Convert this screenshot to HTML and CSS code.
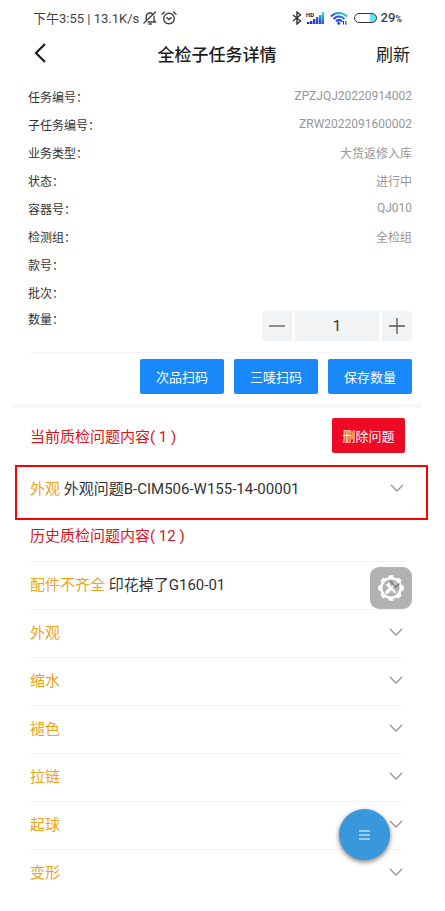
FILE: index.html
```html
<!DOCTYPE html>
<html lang="zh-CN">
<head>
<meta charset="utf-8">
<meta name="viewport" content="width=device-width, initial-scale=1">
<title>全检子任务详情</title>
<link rel="stylesheet" href="styles.css">
</head>
<body>
<svg class="defs" width="0" height="0" aria-hidden="true">
  <defs>
    <linearGradient id="signal" x1="0" y1="1" x2="1" y2="0">
      <stop offset="0" stop-color="#3a10d8"/><stop offset=".5" stop-color="#2459d6"/><stop offset="1" stop-color="#2ff0dc"/>
    </linearGradient>
    <symbol id="chevron" viewBox="0 0 14 8"><path d="M1 1l6 6 6-6" fill="none" stroke="#969799" stroke-width="1.4"/></symbol>
  </defs>
</svg>

<div class="status">
  <div class="status-side">
    <span>下午3:55 | 13.1K/s</span>
    <svg width="14" height="14" viewBox="0 0 14 14" fill="none" stroke="#444" stroke-width="1.4" stroke-linecap="round"><path d="M1 12L12.500 1M3.200 8.500V6C3.200 3.500 4.800 2 7 2c1 0 1.800.3 2.500.9M11 5.200V9l1.300 2H5M6 13h2.400"/></svg>
    <svg class="alarm" width="16" height="14" viewBox="0 0 16 14" fill="none" stroke="#444" stroke-width="1.4" stroke-linecap="round" stroke-linejoin="round"><circle cx="8" cy="7.500" r="5.300"/><path d="M1 3.200L3.500 1M15 3.200L12.500 1M5.800 6.600L8 8.500l2.200-1.900"/></svg>
  </div>
  <div class="status-side">
    <svg width="10" height="14" viewBox="0 0 10 14" fill="none" stroke="#333" stroke-width="1.400"><path d="M1 4l7.500 6L5 13V1l3.500 3L1 10"/></svg>
    <svg class="bars" width="18" height="14" viewBox="0 0 18 14"><path fill="url(#signal)" d="M1 11h2.400v2H1zM4 10h2.400v3H4zM7 8h2.400v5H7zM10 6h2.400v7H10zM13 4h2.400v9H13zM15.800 1H18v12h-2.200z"/><text x="0" y="6" class="hd">HD</text></svg>
    <svg class="wifi" width="18" height="14" viewBox="0 0 18 14" fill="none" stroke="url(#signal)" stroke-width="2"><path d="M1 5.500C5.500.8 12.500.8 17 5.500M3.500 8C7 4.600 11 4.600 14.500 8M6 10.300c2-1.900 4-1.900 6 0"/><circle cx="9" cy="12" r=".8"/><path stroke="#333" stroke-width="1" d="M13.500 13.500v-3.500M15.800 10v3.500M12.500 11l1-1M16.800 12.500l-1 1"/></svg>
    <span class="battery"></span>
    <span class="percent">29<small>%</small></span>
  </div>
</div>

<header class="nav">
  <button class="back" type="button" aria-label="返回"><svg width="12" height="20" viewBox="0 0 12 20" fill="none" stroke="#1c1c1c" stroke-width="2.200"><path d="M11 1L2 10l9 9"/></svg></button>
  <h1>全检子任务详情</h1>
  <button class="refresh" type="button">刷新</button>
</header>

<main>
  <section class="info">
    <dl>
      <div><dt>任务编号：</dt><dd>ZPZJQJ20220914002</dd></div>
      <div><dt>子任务编号：</dt><dd>ZRW2022091600002</dd></div>
      <div><dt>业务类型：</dt><dd>大货返修入库</dd></div>
      <div><dt>状态：</dt><dd>进行中</dd></div>
      <div><dt>容器号：</dt><dd>QJ010</dd></div>
      <div><dt>检测组：</dt><dd>全检组</dd></div>
      <div><dt>款号：</dt><dd></dd></div>
      <div><dt>批次：</dt><dd></dd></div>
    </dl>
    <div class="quantity">
      <label for="qty">数量：</label>
      <div class="stepper">
        <button class="minus" type="button" aria-label="减少"><svg width="16" height="16" viewBox="0 0 16 16"><path d="M0 8h16" stroke="#555" stroke-width="1.300"/></svg></button>
        <input id="qty" type="text" inputmode="numeric" value="1">
        <button class="plus" type="button" aria-label="增加"><svg width="16" height="16" viewBox="0 0 16 16"><path d="M0 8h16M8 0v16" stroke="#555" stroke-width="1.300"/></svg></button>
      </div>
    </div>
    <div class="actions">
      <button type="button">次品扫码</button>
      <button type="button">三唛扫码</button>
      <button type="button">保存数量</button>
    </div>
  </section>

  <section class="current">
    <div class="current-head">
      <h2>当前质检问题内容( 1 )</h2>
      <button class="delete" type="button">删除问题</button>
    </div>
    <button class="issue marked" type="button"><span><b>外观</b> 外观问题B-CIM506-W155-14-00001</span><svg width="14" height="8"><use href="#chevron"/></svg></button>
  </section>

  <section class="history">
    <h2>历史质检问题内容( 12 )</h2>
    <button class="issue" type="button"><span><b>配件不齐全</b> 印花掉了G160-01</span><svg width="14" height="8"><use href="#chevron"/></svg></button>
    <button class="issue" type="button"><b>外观</b><svg width="14" height="8"><use href="#chevron"/></svg></button>
    <button class="issue" type="button"><b>缩水</b><svg width="14" height="8"><use href="#chevron"/></svg></button>
    <button class="issue" type="button"><b>褪色</b><svg width="14" height="8"><use href="#chevron"/></svg></button>
    <button class="issue" type="button"><b>拉链</b><svg width="14" height="8"><use href="#chevron"/></svg></button>
    <button class="issue" type="button"><b>起球</b><svg width="14" height="8"><use href="#chevron"/></svg></button>
    <button class="issue" type="button"><b>变形</b><svg width="14" height="8"><use href="#chevron"/></svg></button>
  </section>
</main>

<button class="tools" type="button" aria-label="工具">
  <svg width="28" height="28" viewBox="0 0 28 28">
    <circle cx="14" cy="14" r="9.800" fill="none" stroke="#fff" stroke-width="2.600"/>
    <g fill="#fff">
      <path id="tooth" d="M11.200 4.500L11.800 1.200h4.400l.6 3.300z"/>
      <use href="#tooth" transform="rotate(45 14 14)"/><use href="#tooth" transform="rotate(90 14 14)"/><use href="#tooth" transform="rotate(135 14 14)"/><use href="#tooth" transform="rotate(180 14 14)"/><use href="#tooth" transform="rotate(225 14 14)"/><use href="#tooth" transform="rotate(270 14 14)"/><use href="#tooth" transform="rotate(315 14 14)"/>
    </g>
    <path d="M11 11l7 7" stroke="#fff" stroke-width="2.400" stroke-linecap="round"/>
    <path d="M8.500 10.500a3 3 0 0 0 4 1.500 3 3 0 0 0-1.500-4v2.500z" fill="#fff"/>
    <path d="M18.500 9.500l-5 5" stroke="#fff" stroke-width="1.500"/>
    <path d="M13 15l-3 3.200" stroke="#fff" stroke-width="3.600" stroke-linecap="round"/>
    <path d="M13 7l6 6 3.500-3.500" fill="none" stroke="#777" stroke-width="1.400"/>
  </svg>
</button>

<button class="fab" type="button" aria-label="菜单">
  <svg width="11" height="10" viewBox="0 0 11 10"><path d="M0 1h11M0 5h11M0 9h11" stroke="#fff" stroke-width="1.200"/></svg>
</button>
</body>
</html>
```
FILE: styles.css
```css
* { box-sizing: border-box; }

body {
  margin: 0;
  background: #fff;
  color: #333;
  font-family: Roboto, "Noto Sans CJK SC", sans-serif;
  font-size: 15px;
}

button, input {
  margin: 0;
  padding: 0;
  border: 0;
  background: none;
  color: inherit;
  font: inherit;
}

h1, h2, dl, dd { margin: 0; }
svg { display: block; flex: none; }
.defs { position: absolute; }

.status {
  display: flex;
  justify-content: space-between;
  height: 35px;
  padding: 0 43px 0 33px;
  color: #444;
  font-size: 13px;
}
.status-side { display: flex; align-items: center; gap: 4px; }
.hd { fill: #222; font-size: 6px; font-weight: 700; }
.bars, .wifi { margin-right: 2px; }
.battery {
  width: 23px;
  height: 10px;
  border: 1px solid #333;
  border-radius: 5px;
  background: linear-gradient(90deg, transparent 70%, #5fe9f2 70%);
}
.percent { font-weight: 500; }
.percent small { font-size: 9px; font-weight: 700; }

.nav {
  display: grid;
  grid-template-columns: 1fr auto 1fr;
  align-items: center;
  height: 36px;
  padding: 0 35px 0 34px;
  color: #1c1c1c;
}
.nav h1 { padding-right: 10px; font-size: 17px; font-weight: 500; }
.back { justify-self: start; }
.refresh { justify-self: end; font-size: 17px; }

.info { margin: 0 23px 0 12px; padding: 11px 10px 10px 16px; border-bottom: 4px solid #f7f8fa; }
.info dl { font-size: 12px; }
.info dl div { display: flex; justify-content: space-between; align-items: center; height: 28px; }
.info dd { color: #969799; }
.quantity { display: flex; justify-content: space-between; height: 47px; border-bottom: 1px solid #f5f5f5; font-size: 12px; }
.quantity label { line-height: 28px; }
.stepper { display: flex; gap: 3px; height: 30px; margin-top: 5px; }
.stepper button { display: grid; place-items: center; width: 30px; background: #f2f3f5; }
.stepper .minus { border-radius: 4px 0 0 4px; }
.stepper .plus { border-radius: 0 4px 4px 0; }
.stepper input { width: 84px; background: #f2f3f5; font-size: 15px; text-align: center; }

.actions { display: flex; justify-content: flex-end; gap: 10px; padding-top: 6px; }
.actions button { width: 84px; height: 35px; border-radius: 2px; background: #1989fa; color: #fff; font-size: 13px; }

.current { padding: 10px 17px 0 15px; }
.current-head { display: flex; align-items: center; justify-content: space-between; height: 47px; padding: 0 23px 12px 15px; }
h2 { color: #d9161b; font-size: 15px; font-weight: 400; }
.delete { width: 73px; height: 35px; border-radius: 2px; background: #ee0a24; color: #fff; font-size: 13px; }

.issue { display: flex; align-items: center; justify-content: space-between; width: 100%; height: 48px; padding: 0 2px 4px 0; border-top: 1px solid #f3f3f3; text-align: left; }
.issue b { color: #eda316; font-weight: 400; }
.marked { height: 55px; padding: 0 22px 10px 13px; border: 2px solid #f00; }

.history { padding: 0 40px 12px 30px; }
.history h2 { height: 41px; line-height: 32px; }

.tools, .fab { position: fixed; display: grid; place-items: center; }
.tools { right: 33px; bottom: 302px; width: 42px; height: 42px; border-radius: 9px; background: #b2b2b2; }
.fab { right: 55px; bottom: 51px; width: 51px; height: 51px; border-radius: 50%; background: #3998db; box-shadow: 0 2px 5px #0008; }
```
